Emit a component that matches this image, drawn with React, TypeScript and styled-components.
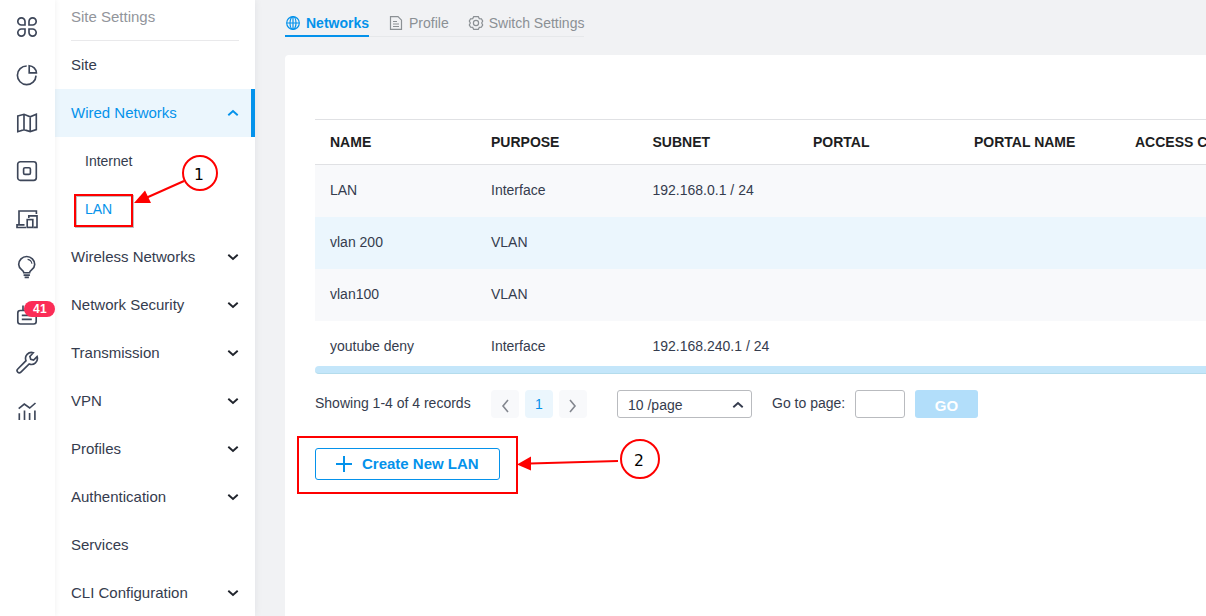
import React from "react";
import styled, { createGlobalStyle, css } from "styled-components";

const BLUE = "#0492eb";
const INK = "#353c4e";

const Global = createGlobalStyle`
  * { box-sizing: border-box; }
  html, body { margin: 0; height: 100%; overflow: hidden; }
  body { font-family: "Liberation Sans", Arial, sans-serif; font-size: 14px; color: ${INK}; }
  button { font-family: inherit; padding: 0; }
`;

const Page = styled.div`
  position: relative;
  display: flex;
  width: 100vw;
  height: 100vh;
  overflow: hidden;
  background: #f1f2f4;
`;

const Rail = styled.nav`
  flex: 0 0 55px;
  display: flex;
  flex-direction: column;
  padding: 3px 0 0;
  background: #fff;
  box-shadow: 0 0 6px rgba(0, 0, 0, 0.07);
  z-index: 2;
`;

const RailItem = styled.div`
  position: relative;
  height: 48px;
  padding: 12px 0 0 15px;
`;

const RailSvg = styled.svg`
  display: block;
  width: 24px;
  height: 24px;
  fill: none;
  stroke: #3d4659;
  stroke-width: 1.65;
`;

const Badge = styled.span`
  position: absolute;
  left: 24px;
  top: 10px;
  width: 31px;
  height: 16px;
  padding-left: 1px;
  border-radius: 8px;
  background: #fb2c56;
  color: #fff;
  font-size: 12px;
  font-weight: bold;
  letter-spacing: 0.4px;
  line-height: 16px;
  text-align: center;
`;

const Menu = styled.aside`
  flex: 0 0 200px;
  background: #fff;
  box-shadow: 0 0 8px rgba(0, 0, 40, 0.07);
  z-index: 1;
`;

const MenuTitle = styled.div`
  height: 41px;
  margin: 0 16px;
  padding-top: 1px;
  line-height: 32px;
  font-size: 15px;
  color: #92959b;
  border-bottom: 1px solid #e9e9eb;
`;

const MenuItem = styled.div<{ $active?: boolean }>`
  display: flex;
  align-items: center;
  justify-content: space-between;
  height: 48px;
  padding: 0 16px;
  line-height: 48px;
  font-size: 15px;
  ${(p) =>
    p.$active &&
    css`
      color: ${BLUE};
      background: #ebf6fd;
      border-right: 4px solid ${BLUE};
      padding-right: 12px;
    `}
`;

const MenuLabel = styled.span`
  height: 48px;
`;

const SubItem = styled.div<{ $active?: boolean }>`
  height: 48px;
  line-height: 48px;
  padding-left: 30px;
  font-size: 14px;
  color: ${(p) => (p.$active ? BLUE : INK)};
`;

const Chevron = styled.svg`
  width: 12px;
  height: 12px;
  fill: none;
  stroke: currentColor;
  stroke-width: 1.9;
`;

const MenuChevron = styled(Chevron)<{ $active?: boolean }>`
  color: ${(p) => (p.$active ? BLUE : "#20242c")};
`;

const Main = styled.main`
  flex: 1;
  min-width: 0;
  display: flex;
  flex-direction: column;
  padding-left: 30px;
`;

const Tabs = styled.div`
  display: flex;
  gap: 19px;
  height: 37px;
  margin-bottom: 18px;
  align-self: flex-start;
  box-shadow: inset 0 -1px #e6e8ea;
`;

const Tab = styled.div<{ $active?: boolean }>`
  display: flex;
  align-items: center;
  gap: 5px;
  height: 37px;
  padding-top: ${(p) => (p.$active ? "11px" : "9px")};
  color: ${(p) => (p.$active ? BLUE : "#8b9094")};
  font-weight: ${(p) => (p.$active ? "bold" : "normal")};
  border-bottom: ${(p) => (p.$active ? `2px solid ${BLUE}` : "0")};
  white-space: nowrap;
`;

const TabSvg = styled.svg`
  width: 16px;
  height: 16px;
  fill: none;
  stroke: currentColor;
  stroke-width: 1.2;
`;

const Card = styled.section`
  flex: 1;
  padding: 64px 0 0 30px;
  background: #fff;
  border-radius: 4px 0 0 0;
  overflow: hidden;
`;

const Table = styled.div`
  width: 966px;
`;

const Row = styled.div<{ $tone?: string; $last?: boolean }>`
  display: grid;
  grid-template-columns: 161px 161.5px 160.5px repeat(3, 161px);
  height: ${(p) => (p.$last ? "45px" : "52px")};
  line-height: 50px;
  background: ${(p) => p.$tone || "#fff"};
`;

const HeadRow = styled(Row)`
  height: 46px;
  line-height: 45px;
  border-top: 1px solid #e0e1e4;
  border-bottom: 1px solid #e0e1e4;
  font-weight: bold;
  color: #1d1e22;
`;

const Cell = styled.div`
  padding-left: 15px;
  white-space: nowrap;
`;

const ScrollBar = styled.div`
  height: 8px;
  background: #c4e6fa;
  border-radius: 4px;
  border-bottom: 1px solid #b4dcec;
`;

const Pager = styled.div`
  display: flex;
  align-items: center;
  height: 28px;
  margin-top: 16px;
`;

const PagerText = styled.span<{ $width: number }>`
  width: ${(p) => p.$width}px;
  padding-bottom: 2px;
  white-space: nowrap;
`;

const PageButtons = styled.div`
  display: flex;
  gap: 6px;
  margin: 0 30px 0 0;
`;

const PageButton = styled.button<{ $active?: boolean }>`
  width: 28px;
  height: 28px;
  border: 0;
  border-radius: 4px;
  display: flex;
  align-items: center;
  justify-content: center;
  font-size: 14px;
  color: ${(p) => (p.$active ? BLUE : "#83878f")};
  background: ${(p) => (p.$active ? "#ebf6fd" : "#f8f9fb")};
`;

const ArrowSvg = styled.svg`
  width: 12px;
  height: 16px;
  margin-top: 4px;
  fill: none;
  stroke: currentColor;
  stroke-width: 1.6;
`;

const Select = styled.div`
  display: flex;
  align-items: center;
  justify-content: space-between;
  width: 135px;
  height: 28px;
  padding: 2px 7px 0 10px;
  margin-right: 20px;
  border: 1px solid #b9bbbf;
  border-radius: 3px;
`;

const PageInput = styled.input`
  width: 50px;
  height: 28px;
  margin: 0 10px 0 0;
  border: 1px solid #b9bbbf;
  border-radius: 3px;
  background: #fff;
`;

const GoButton = styled.button`
  width: 63px;
  height: 28px;
  padding-top: 3px;
  border: 0;
  border-radius: 3px;
  background: #b2defa;
  color: #fff;
  font-size: 15px;
  font-weight: bold;
`;

const CreateButton = styled.button`
  display: flex;
  align-items: center;
  gap: 10px;
  width: 185px;
  height: 32px;
  margin-top: 30px;
  padding-left: 20px;
  border: 1px solid ${BLUE};
  border-radius: 3px;
  background: #fff;
  color: ${BLUE};
  font-size: 15px;
  font-weight: bold;
  white-space: nowrap;
`;

const CreateLabel = styled.span`
  padding-bottom: 2px;
`;

const PlusSvg = styled.svg`
  width: 16px;
  height: 16px;
  stroke: currentColor;
  stroke-width: 2;
`;

const Markup = styled.svg`
  position: absolute;
  inset: 0;
  width: 1206px;
  height: 616px;
  z-index: 5;
  pointer-events: none;
  fill: none;
  stroke: #fe0000;
  stroke-width: 2;

  text {
    font-family: "DejaVu Sans", sans-serif;
    font-size: 15.5px;
    font-weight: 400;
    fill: #000;
    stroke: none;
    text-anchor: middle;
  }
  polygon {
    fill: #fe0000;
    stroke: none;
  }
`;

const railIcons: React.ReactNode[] = [
  <>
    <path d="M10 10H6.5A3.6 3.6 0 1 1 10 6.4z" />
    <path d="M14 10h3.5A3.6 3.6 0 1 0 14 6.4z" />
    <path d="M10 14H6.5A3.6 3.6 0 1 0 10 17.6z" />
    <path d="M14 14h3.5A3.6 3.6 0 1 1 14 17.6z" />
  </>,
  <>
    <path d="M11.7 3a9.3 9.3 0 1 0 9.3 9.6" />
    <path d="M14.2 2.7V9.8H21.4A7.6 7.6 0 0 0 14.2 2.7z" />
  </>,
  <path d="M2.8 5L9 3.3l6.2 2.5L21.3 3.3V18.6l-6.1 2L9 18.7l-6.2 2zM9 3.3V18.7M15.2 5.8V20.6" />,
  <>
    <rect x="2.7" y="2.7" width="18.6" height="18.6" rx="2.6" />
    <rect x="8.6" y="8.7" width="6.8" height="6.6" rx="1.4" />
  </>,
  <>
    <path d="M4 17.5V4H21.4V7M9.5 17.8H2v2.7h9" />
    <path d="M13.8 11V8.9H22V20.4H18.5" />
    <rect x="12.2" y="12.6" width="5.6" height="7.8" />
  </>,
  <>
    <path d="M8.8 17.7C8.8 15 3.7 14.4 3.7 9.5a8 8 0 0 1 16 0c0 4.9-5.1 5.5-5.1 8.2z" />
    <path d="M8.6 20.1h6.3M9.6 22.3h4.3" />
    <path d="M12.6 4.4a5 5 0 0 1 4.3 4.3" strokeWidth="1.1" />
  </>,
  <>
    <rect x="2.8" y="7.5" width="18.4" height="13.5" rx="2.5" />
    <path d="M8 2.5V7.5M16 2.5V7.5M6.8 12.4h10M6.8 16.4h10" />
  </>,
  <path d="M18.3 1.7a6 6 0 0 0-7.3 8L2.8 18a2.2 2.2 0 0 0 3.1 3.2L14.2 13a6 6 0 0 0 7.9-7.4l-3.5 3.5-2.9-.8-.8-2.9z" />,
  <path d="M3.7 9.7L9.3 5l5.4 4L20.5 4M4.3 14.3V21M9.5 11.5V21M14.6 14V21M19.9 11.5V21" />,
];

const menuItems: [string, boolean][] = [
  ["Wireless Networks", true],
  ["Network Security", true],
  ["Transmission", true],
  ["VPN", true],
  ["Profiles", true],
  ["Authentication", true],
  ["Services", false],
  ["CLI Configuration", true],
];

const columns = ["NAME", "PURPOSE", "SUBNET", "PORTAL", "PORTAL NAME", "ACCESS CONTROL"];

const networks = [
  { name: "LAN", purpose: "Interface", subnet: "192.168.0.1 / 24", tone: "#f8f9fb" },
  { name: "vlan 200", purpose: "VLAN", subnet: "", tone: "#ebf6fd" },
  { name: "vlan100", purpose: "VLAN", subnet: "", tone: "#f8f9fb" },
  { name: "youtube deny", purpose: "Interface", subnet: "192.168.240.1 / 24", tone: "#fff" },
];

const Down = () => (
  <MenuChevron viewBox="0 0 12 12">
    <path d="M1.3 3.7L6 8l4.7-4.3" />
  </MenuChevron>
);

export default function App() {
  return (
    <Page>
      <Global />
      <Rail>
        {railIcons.map((icon, i) => (
          <RailItem key={i}>
            <RailSvg viewBox="0 0 24 24">{icon}</RailSvg>
            {i === 6 && <Badge>41</Badge>}
          </RailItem>
        ))}
      </Rail>

      <Menu>
        <MenuTitle>Site Settings</MenuTitle>
        <MenuItem>
          <MenuLabel>Site</MenuLabel>
        </MenuItem>
        <MenuItem $active>
          <MenuLabel>Wired Networks</MenuLabel>
          <MenuChevron $active viewBox="0 0 12 12">
            <path d="M1.3 8.3L6 4l4.7 4.3" />
          </MenuChevron>
        </MenuItem>
        <SubItem>Internet</SubItem>
        <SubItem $active>LAN</SubItem>
        {menuItems.map(([label, expandable]) => (
          <MenuItem key={label}>
            <MenuLabel>{label}</MenuLabel>
            {expandable && <Down />}
          </MenuItem>
        ))}
      </Menu>

      <Main>
        <Tabs>
          <Tab $active>
            <TabSvg viewBox="0 0 16 16">
              <circle cx="8" cy="8" r="6.3" />
              <ellipse cx="8" cy="8" rx="3" ry="6.3" />
              <path d="M1.7 8h12.6M8 1.7v12.6" />
            </TabSvg>
            Networks
          </Tab>
          <Tab>
            <TabSvg viewBox="0 0 16 16">
              <path d="M2.5 1.7h7.5l3.5 3.5v9.1h-11zM5 6.5h4M5 9h6M5 11.5h6" />
            </TabSvg>
            Profile
          </Tab>
          <Tab>
            <TabSvg viewBox="0 0 16 16">
              <path d="M5.7 1.7h4.6l1 1.9 2.1.2 1.3 2.3L13.7 8l1 1.9-1.3 2.3-2.1.2-1 1.9H5.7l-1-1.9-2.1-.2L1.3 9.9l1-1.9-1-1.9 1.3-2.3 2.1-.2z" />
              <circle cx="8" cy="8" r="2.6" />
            </TabSvg>
            Switch Settings
          </Tab>
        </Tabs>

        <Card>
          <Table>
            <HeadRow>
              {columns.map((c) => (
                <Cell key={c}>{c}</Cell>
              ))}
            </HeadRow>
            {networks.map((n, i) => (
              <Row key={n.name} $tone={n.tone} $last={i === networks.length - 1}>
                <Cell>{n.name}</Cell>
                <Cell>{n.purpose}</Cell>
                <Cell>{n.subnet}</Cell>
              </Row>
            ))}
            <ScrollBar />
          </Table>

          <Pager>
            <PagerText $width={176}>Showing 1-4 of 4 records</PagerText>
            <PageButtons>
              <PageButton aria-label="Previous page">
                <ArrowSvg viewBox="0 0 12 16">
                  <path d="M9 2L4 8l5 6" />
                </ArrowSvg>
              </PageButton>
              <PageButton $active>1</PageButton>
              <PageButton aria-label="Next page">
                <ArrowSvg viewBox="0 0 12 16">
                  <path d="M3 2l5 6-5 6" />
                </ArrowSvg>
              </PageButton>
            </PageButtons>
            <Select>
              10 /page
              <Chevron viewBox="0 0 12 12">
                <path d="M1.3 8.3L6 4l4.7 4.3" />
              </Chevron>
            </Select>
            <PagerText $width={83}>Go to page:</PagerText>
            <PageInput aria-label="Page number" />
            <GoButton>GO</GoButton>
          </Pager>

          <CreateButton>
            <PlusSvg viewBox="0 0 16 16">
              <path d="M8 0v16M0 8h16" />
            </PlusSvg>
            <CreateLabel>Create New LAN</CreateLabel>
          </CreateButton>
        </Card>
      </Main>

      <Markup viewBox="0 0 1206 616">
        <rect x="76" y="196" width="57" height="31" stroke="#000" strokeOpacity="0.25" />
        <rect x="75" y="195" width="57" height="31" />
        <circle cx="200" cy="173" r="17" />
        <path d="M184 181L147 197.5" />
        <polygon points="134,203 145,190.5 151,203" />
        <text x="199" y="180">1</text>
        <rect x="298" y="437" width="219" height="56" />
        <circle cx="640" cy="459" r="19" />
        <path d="M618 461L530 463.5" />
        <polygon points="517,464.5 531,456.5 531,470.5" />
        <text x="639" y="466">2</text>
      </Markup>
    </Page>
  );
}
